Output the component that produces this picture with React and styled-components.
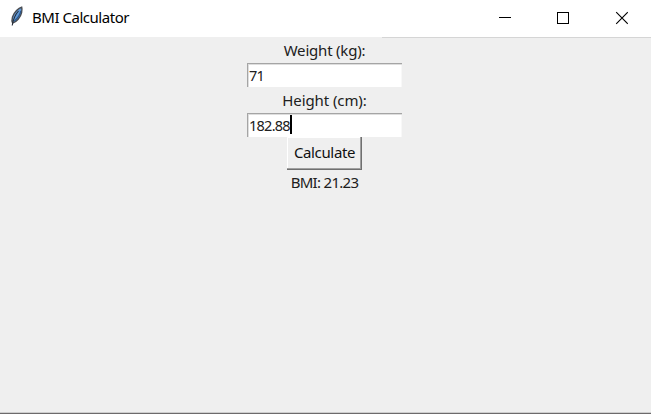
import React from "react";
import styled, { createGlobalStyle } from "styled-components";

const GlobalStyle = createGlobalStyle`
  html, body { margin: 0; padding: 0; overflow: hidden; }
  * { box-sizing: border-box; }
`;

const Window = styled.main`
  width: 651px;
  height: 414px;
  display: flex;
  flex-direction: column;
  background: #efefef;
  border-bottom: 1px solid #6c6a6b;
  font-family: "Noto Sans", "Open Sans", sans-serif;
  font-size: 15px;
  color: #202020;
`;

const TitleBar = styled.header`
  height: 37px;
  flex: none;
  display: flex;
  align-items: flex-start;
  padding-right: 1px;
  background: #fff;
  color: #000;
`;

const Feather = styled.svg`
  width: 16px;
  height: 22px;
  margin: 6px 0 0 9px;
  flex: none;
`;

const Title = styled.h1`
  margin: 0 auto 0 7px;
  padding-top: 7px;
  font-size: 15px;
  font-weight: 400;
  line-height: 20px;
`;

const WindowButton = styled.button`
  width: 58px;
  height: 36px;
  padding: 0;
  border: 0;
  background: transparent;
  display: flex;
  justify-content: center;
  svg { display: block; width: 14px; height: 36px; }
`;

const TopEdge = styled.div`
  height: 1px;
  flex: none;
  background: linear-gradient(to right, #efefef 382px, #d5d5d5 382px);
`;

const Form = styled.section`
  flex: 1;
  display: flex;
  flex-direction: column;
  align-items: center;
  padding-right: 2px;
`;

const Text = styled.span`
  display: inline-block;
  white-space: pre;
  letter-spacing: ${(p) => p.$spacing || 0}px;
`;

const Label = styled.label`
  height: ${(p) => p.$height || 26}px;
  line-height: ${(p) => p.$line || 26}px;
`;

const Entry = styled.div`
  width: 155px;
  height: 24px;
  flex: none;
  display: flex;
  align-items: center;
  padding: 0 0 2px 1px;
  font-size: 14.5px;
  line-height: 20px;
  background: #fff;
  border-top: 1px solid #a5a5a5;
  border-left: 1px solid #a5a5a5;
  box-shadow: inset 1px 1px 0 #dedede, inset -1px 0 0 #f8f8f8;
`;

const Caret = styled.i`
  width: 2px;
  height: 19px;
  background: #000;
`;

const Calculate = styled.button`
  width: 75px;
  height: 33px;
  flex: none;
  padding: 0 0 3px;
  border: 0;
  background: #efefef;
  box-shadow: inset -1px -1px 0 #707070, inset -2px -2px 0 #a0a0a0, inset 1px 1px 0 #fff;
  font: inherit;
  color: #111;
`;

const Status = styled.output`
  height: 24px;
  line-height: 24px;
`;

const BottomEdge = styled.div`
  height: 1px;
  flex: none;
  background: #cecece;
`;

export default function App() {
  return (
    <>
      <GlobalStyle />
      <Window>
        <TitleBar>
          <Feather viewBox="0 0 16 22">
            <path d="M12.7 1.2C9.5 2 5.2 6 3.5 11C2.7 14 3 16 3.6 17C7.5 16 11.5 11.5 12.6 6.5C13.1 4 13 2 12.7 1.2Z" fill="#5f98d6" stroke="#4a4d52" strokeWidth="1.4" />
            <path d="M9.5 5C6.3 8.5 4.3 12.5 3.2 19.5" fill="none" stroke="#242c36" strokeWidth="1.1" />
            <path d="M11.9 5C11 9 8.5 12.5 5.3 15" fill="none" stroke="#2d588c" strokeWidth="1.2" />
          </Feather>
          <Title><Text $spacing={-0.47}>BMI Calculator</Text></Title>
          <WindowButton aria-label="Minimize">
            <svg viewBox="0 0 14 36" shapeRendering="crispEdges"><path d="M1 17.5H13" stroke="#000" /></svg>
          </WindowButton>
          <WindowButton aria-label="Maximize">
            <svg viewBox="0 0 14 36" shapeRendering="crispEdges"><rect x="1.5" y="12.5" width="11" height="11" fill="none" stroke="#000" /></svg>
          </WindowButton>
          <WindowButton aria-label="Close">
            <svg viewBox="-1 0 14 36"><path d="M1.2 12.2L12.8 23.8M12.8 12.2L1.2 23.8" stroke="#000" strokeWidth="1.1" /></svg>
          </WindowButton>
        </TitleBar>
        <TopEdge />
        <Form>
          <Label $height={25} $line={25}><Text $spacing={-0.2}>Weight (kg):</Text></Label>
          <Entry><Text $spacing={-0.75}>71</Text></Entry>
          <Label><Text $spacing={-0.1}>Height (cm):</Text></Label>
          <Entry><Text $spacing={-0.75}>182.88</Text><Caret /></Entry>
          <Calculate><Text $spacing={-0.35}>Calculate</Text></Calculate>
          <Status><Text $spacing={-0.7}>BMI: 21.23</Text></Status>
        </Form>
        <BottomEdge />
      </Window>
    </>
  );
}
